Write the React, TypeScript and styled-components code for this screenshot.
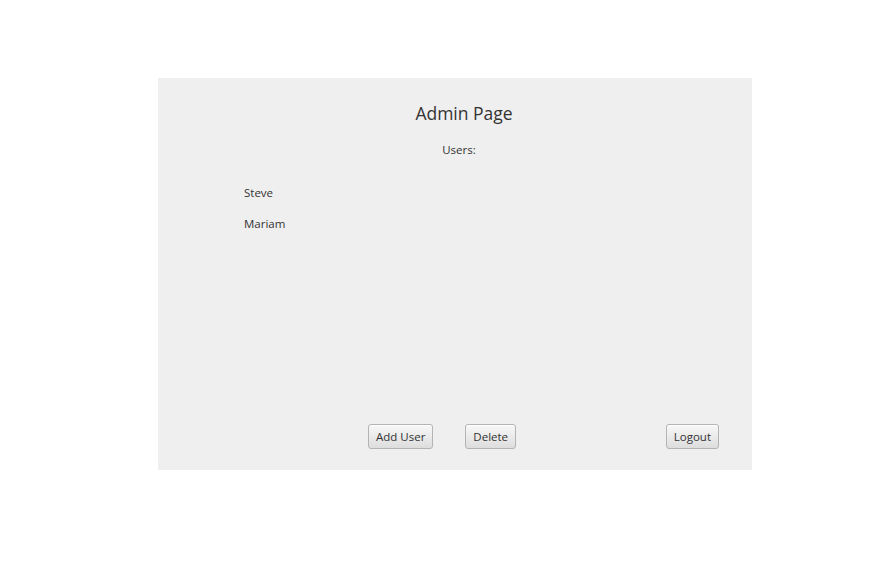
import React from "react";
import styled, { createGlobalStyle } from "styled-components";

const Global = createGlobalStyle`
  html, body { margin: 0; padding: 0; background: #ffffff; }
  body { font-family: "Open Sans", "Noto Sans", sans-serif; color: #333333; }
`;

const Panel = styled.div`
  margin: 78px 0 0 158px;
  width: 594px;
  height: 392px;
  background: #efefef;
  display: flex;
  flex-direction: column;
  box-sizing: border-box;
  padding: 23px 33px 21px 0;
`;

const Title = styled.div`
  font-size: 17.5px;
  line-height: 24px;
  text-align: center;
  padding-left: 51px;
  color: #333333;
`;

const Subtitle = styled.div`
  font-size: 11.5px;
  line-height: 16px;
  text-align: center;
  padding-left: 41px;
  margin-top: 17px;
`;

const List = styled.div`
  display: flex;
  flex-direction: column;
  gap: 15px;
  padding-left: 86px;
  margin-top: 27px;
`;

const Item = styled.div`
  font-size: 11.5px;
  line-height: 16px;
`;

const Footer = styled.div`
  margin-top: auto;
  display: flex;
  align-items: center;
  gap: 32px;
  padding-left: 210px;
`;

const Button = styled.button<{ $push?: boolean }>`
  height: 25px;
  padding: 0 7px;
  font-family: "Open Sans", "Noto Sans", sans-serif;
  font-size: 11.5px;
  color: #333333;
  border: 1px solid #b4b4b4;
  border-radius: 3px;
  background: linear-gradient(#f8f8f8, #dddddd);
  box-shadow: inset 0 1px 0 #ffffff;
  margin-left: ${(p) => (p.$push ? "auto" : "0")};
  cursor: pointer;
`;

export default function App() {
  return (
    <>
      <Global />
      <Panel>
        <Title>Admin Page</Title>
        <Subtitle>Users:</Subtitle>
        <List>
          <Item>Steve</Item>
          <Item>Mariam</Item>
        </List>
        <Footer>
          <Button>Add User</Button>
          <Button>Delete</Button>
          <Button $push>Logout</Button>
        </Footer>
      </Panel>
    </>
  );
}
